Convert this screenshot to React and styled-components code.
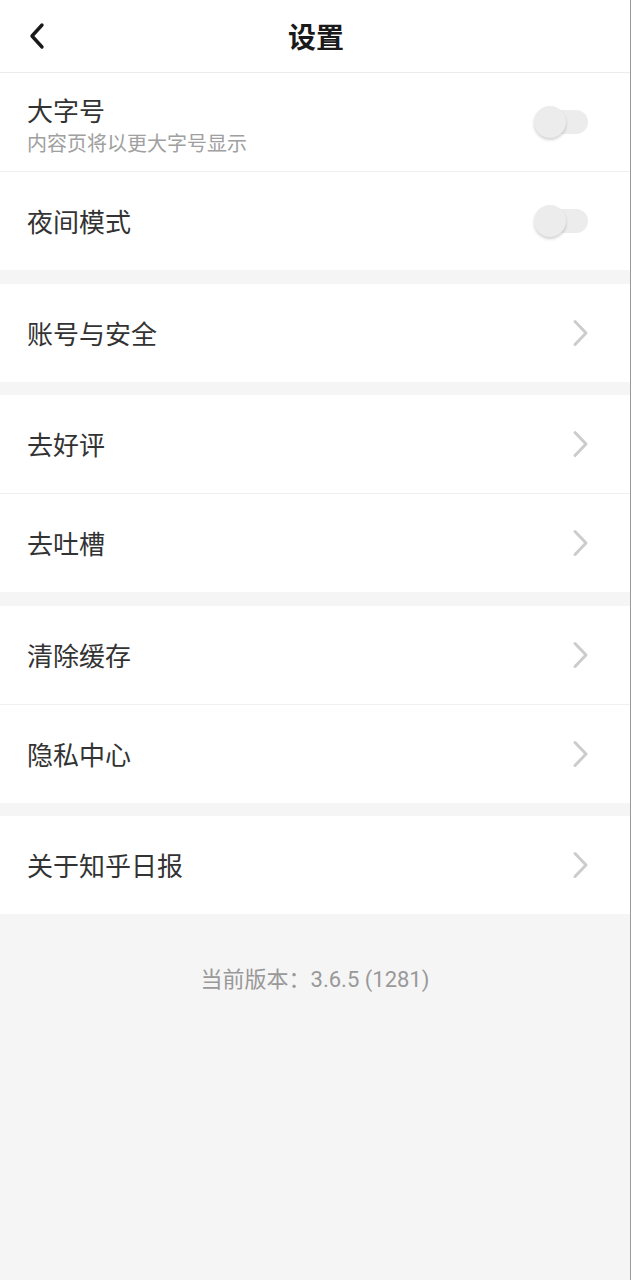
import React from "react";
import styled, { createGlobalStyle } from "styled-components";

const Global = createGlobalStyle`
  html, body { margin: 0; padding: 0; background: #f5f5f5; }
  body { font-family: "Noto Sans CJK SC", "Noto Sans", Roboto, sans-serif; }
  #root { min-height: 1280px; }
`;

const Page = styled.div`
  width: 630px;
  min-height: 1280px;
  background: #f5f5f5;
  border-right: 1px solid #9a9a9a;
  display: flex;
  flex-direction: column;
`;

const Header = styled.header`
  height: 72px;
  background: #fff;
  border-bottom: 1px solid #ececec;
  display: flex;
  align-items: center;
  justify-content: center;
  position: relative;
`;

const BackButton = styled.button`
  position: absolute;
  left: 22px;
  top: 20px;
  width: 32px;
  height: 32px;
  padding: 0;
  border: none;
  background: transparent;
  display: flex;
  align-items: center;
  justify-content: center;
`;

const Title = styled.h1`
  margin: 0 0 0 2px;
  font-size: 28px;
  font-weight: 700;
  color: #1a1a1a;
  line-height: 1;
`;

const Section = styled.section`
  background: #fff;
  margin-bottom: 13.5px;
  display: flex;
  flex-direction: column;
`;

const Row = styled.div`
  height: 98px;
  padding: 0 41px 0 27px;
  display: flex;
  align-items: center;
  justify-content: space-between;
  & + & { border-top: 1px solid #f0f0f0; }
`;

const TextCol = styled.div`
  display: flex;
  flex-direction: column;
  gap: ${(p) => (p.$sub ? "5px" : "0")};
  margin-top: ${(p) => (p.$sub ? "4px" : "0")};
`;

const Label = styled.span`
  font-size: 26px;
  color: #333;
  line-height: 32px;
`;

const Sub = styled.span`
  font-size: 20px;
  color: #a0a0a0;
  line-height: 24px;
`;

const Toggle = styled.div`
  position: relative;
  width: 54px;
  height: 32px;
  margin-right: 1px;
  &::before {
    content: "";
    position: absolute;
    left: 14px;
    top: 4px;
    width: 40px;
    height: 24px;
    border-radius: 12px;
    background: #ececec;
  }
  &::after {
    content: "";
    position: absolute;
    left: 0;
    top: 0;
    width: 32px;
    height: 32px;
    border-radius: 50%;
    background: #ececec;
    box-shadow: 0 2px 3px rgba(0, 0, 0, 0.18);
  }
`;

const Footer = styled.div`
  text-align: center;
  padding-top: 33px;
  font-size: 22px;
  color: #999;
  font-family: Roboto, "Noto Sans CJK SC", sans-serif;
`;

const Chevron = () => (
  <svg width="18" height="28" viewBox="0 0 18 28">
    <path d="M4 2.5 L15 14 L4 25.5" fill="none" stroke="#cccccc" strokeWidth="3" strokeLinecap="round" strokeLinejoin="round" />
  </svg>
);

const Back = () => (
  <svg width="22" height="28" viewBox="0 0 22 28">
    <path d="M15 3 L5 14 L15 25" fill="none" stroke="#1a1a1a" strokeWidth="3.4" strokeLinecap="round" strokeLinejoin="round" />
  </svg>
);

const sections = [
  [
    { label: "大字号", sub: "内容页将以更大字号显示", toggle: true },
    { label: "夜间模式", toggle: true },
  ],
  [{ label: "账号与安全" }],
  [{ label: "去好评" }, { label: "去吐槽" }],
  [{ label: "清除缓存" }, { label: "隐私中心" }],
  [{ label: "关于知乎日报" }],
];

export default function App() {
  return (
    <>
      <Global />
      <Page>
        <Header>
          <BackButton aria-label="返回">
            <Back />
          </BackButton>
          <Title>设置</Title>
        </Header>
        {sections.map((items, i) => (
          <Section key={i}>
            {items.map((it) => (
              <Row key={it.label}>
                <TextCol $sub={!!it.sub}>
                  <Label>{it.label}</Label>
                  {it.sub && <Sub>{it.sub}</Sub>}
                </TextCol>
                {it.toggle ? <Toggle /> : <Chevron />}
              </Row>
            ))}
          </Section>
        ))}
        <Footer>当前版本：3.6.5 (1281)</Footer>
      </Page>
    </>
  );
}
